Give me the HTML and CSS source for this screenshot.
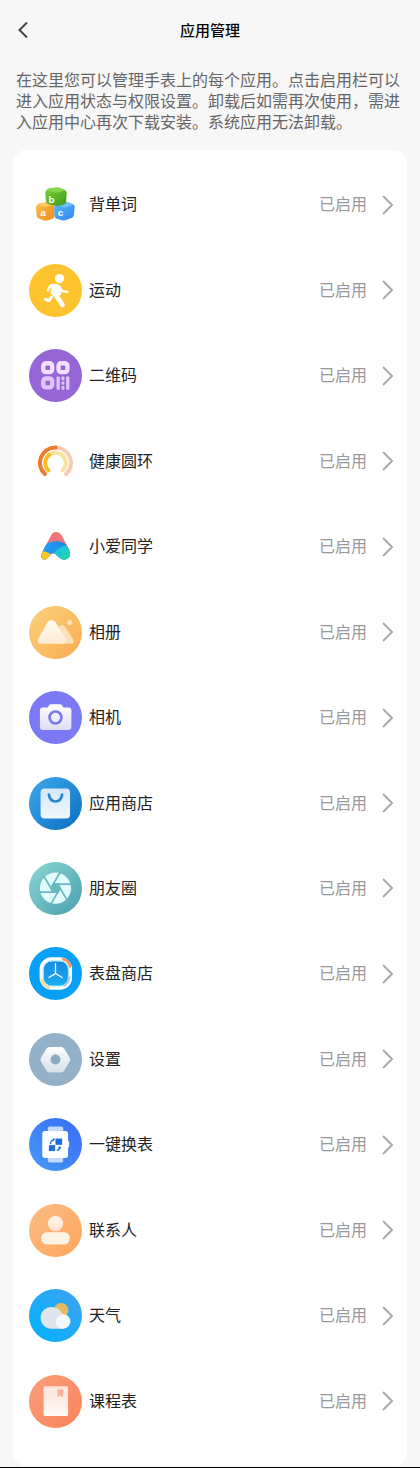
FILE: index.html
```html
<!DOCTYPE html>
<html lang="zh-CN">
<head>
<meta charset="UTF-8" />
<meta name="viewport" content="width=device-width, initial-scale=1" />
<title>应用管理</title>
<link rel="stylesheet" href="styles.css">
</head>
<body>
  <header class="topbar">
    <button class="back" type="button" aria-label="返回">
      <svg width="10" height="16" viewBox="0 0 10 16"><path d="M9 0.500 1.500 8 9 15.500" /></svg>
    </button>
    <h1>应用管理</h1>
  </header>

  <p class="intro">在这里您可以管理手表上的每个应用。点击启用栏可以进入应用状态与权限设置。卸载后如需再次使用，需进入应用中心再次下载安装。系统应用无法卸载。</p>

  <main class="card">
    <!-- 背单词 -->
    <a class="row" href="#">
      <svg class="icon" viewBox="0 0 160 160">
        <defs>
          <linearGradient id="cubeG" x2="1" y2="1"><stop stop-color="#7fd03a" /><stop offset="1" stop-color="#3a9a1c" /></linearGradient>
          <linearGradient id="cubeO" x2="1" y2="1"><stop stop-color="#ffc04a" /><stop offset="1" stop-color="#ec8a1c" /></linearGradient>
          <linearGradient id="cubeB" x2="1" y2="1"><stop stop-color="#5cb8f8" /><stop offset="1" stop-color="#2f86e6" /></linearGradient>
        </defs>
        <path fill="url(#cubeO)" d="M24 82q3-5 9-6l20-3q5 0 10 2l9 4q5 3 5 8v27q0 7-7 9l-14 5q-5 1-10 0l-16-6q-7-2-7-9l-2-22q0-5 3-9z" />
        <path fill="#ffc860" d="M24 82q3-5 9-6l20-3q5 0 10 2l11 6-20 5q-4 1-8 0z" />
        <path fill="url(#cubeB)" d="M80 80q3-4 9-5l20-3q6 0 11 2l13 5q5 3 5 9l-3 25q-1 6-7 8l-16 6q-5 2-10 1l-18-5q-7-2-7-9l-1-24q0-6 4-10z" />
        <path fill="#6cc2fb" d="M80 80q3-4 9-5l20-3q6 0 11 2l15 6-20 7q-5 2-10 1z" />
        <path fill="url(#cubeG)" d="M52 37q4-5 12-6l22-2q6 0 12 3l10 4q6 3 6 9l-2 27q-1 6-7 8l-14 4q-5 1-10 0l-22-5q-8-2-8-10l-2-22q0-6 3-10z" />
        <path fill="#86d648" d="M52 37q4-5 12-6l22-2q6 0 12 3l12 5-24 7q-4 1-8 0z" />
        <text class="cube-letter" x="68" y="74">b</text>
        <text class="cube-letter" x="42" y="116">a</text>
        <text class="cube-letter" x="95" y="116">c</text>
      </svg>
      <span class="name">背单词</span><span class="state">已启用</span>
      <svg class="arrow" viewBox="0 0 12 20"><path d="M1 1 10 10 1 19" /></svg>
    </a>

    <!-- 运动 -->
    <a class="row" href="#">
      <svg class="icon" viewBox="0 0 160 160">
        <circle cx="80" cy="80" r="80" fill="#fdc42f" />
        <circle cx="92" cy="44" r="14" fill="#fff" />
        <path fill="#fff" d="M63 62 84 60q6 0 8 5l6 14-1 12q-3 5-8 5l-14-8z" />
        <g fill="none" stroke="#fff" stroke-linecap="round" stroke-linejoin="round">
          <path stroke-width="7" d="M57 80 64 66 82 63M90 67l11 15 15 2" />
          <path stroke-width="14" d="M76 68 72 87M77 90l13 16 11 18" />
          <path stroke-width="9" d="M68 100 61 110 50 107" />
        </g>
      </svg>
      <span class="name">运动</span><span class="state">已启用</span>
      <svg class="arrow" viewBox="0 0 12 20"><path d="M1 1 10 10 1 19" /></svg>
    </a>

    <!-- 二维码 -->
    <a class="row" href="#">
      <svg class="icon" viewBox="0 0 160 160">
        <circle cx="80" cy="80" r="80" fill="#9665d6" />
        <g fill="none" stroke="#f1e0ff" stroke-width="13">
          <rect x="43" y="43" width="27" height="27" rx="8" />
          <rect x="89" y="43" width="27" height="27" rx="8" />
          <rect x="43" y="89" width="27" height="27" rx="8" stroke="#dfc6fa" />
        </g>
        <g fill="#dfc6fa">
          <rect x="83" y="83" width="10" height="40" rx="3" />
          <rect x="98" y="83" width="9" height="11" rx="3" />
          <rect x="98" y="98" width="9" height="10" rx="3" />
          <rect x="98" y="112" width="9" height="11" rx="3" />
          <rect x="112" y="83" width="10" height="40" rx="3" />
        </g>
      </svg>
      <span class="name">二维码</span><span class="state">已启用</span>
      <svg class="arrow" viewBox="0 0 12 20"><path d="M1 1 10 10 1 19" /></svg>
    </a>

    <!-- 健康圆环 -->
    <a class="row" href="#">
      <svg class="icon" viewBox="0 0 160 160">
        <g fill="none" stroke-width="12" stroke-linecap="round">
          <path stroke="#f8cdb0" d="M80 38A46 46 0 0 1 112 118" />
          <path stroke="#ee7b30" d="M48 118A46 46 0 0 1 80 38" />
          <path stroke="#fae3a0" d="M62 59A31 31 0 0 1 101 107" />
          <path stroke="#f9bd28" d="M59 107A31 31 0 0 1 62 59" />
        </g>
      </svg>
      <span class="name">健康圆环</span><span class="state">已启用</span>
      <svg class="arrow" viewBox="0 0 12 20"><path d="M1 1 10 10 1 19" /></svg>
    </a>

    <!-- 小爱同学 -->
    <a class="row" href="#">
      <svg class="icon" viewBox="0 0 160 160">
        <defs>
          <clipPath id="aiShape"><path d="M67 45Q72 36 82 36T98 45L121 88Q129 104 119 115 109 123 97 118 89 113 82 104 70 95 62 108 52 123 42 119 34 114 38 101Z" /></clipPath>
          <linearGradient id="aiTop" x2="0" y2="1"><stop stop-color="#f27a6c" /><stop offset="1" stop-color="#ee6aa8" /></linearGradient>
          <linearGradient id="aiMid" x2="1"><stop stop-color="#24a4f4" /><stop offset="1" stop-color="#1d7ee6" /></linearGradient>
          <linearGradient id="aiEnd" x2="1" y2="1"><stop stop-color="#19bde8" /><stop offset="1" stop-color="#26dc9c" /></linearGradient>
        </defs>
        <g clip-path="url(#aiShape)">
          <rect x="30" y="30" width="100" height="95" fill="url(#aiTop)" />
          <path fill="url(#aiMid)" d="M30 84Q80 50 112 74L130 125H30Z" />
          <path fill="url(#aiEnd)" d="M76 98Q96 74 116 78L135 100V125H90Z" />
          <path fill="#fbc61f" d="M30 94Q48 92 66 103L58 125H30Z" />
        </g>
      </svg>
      <span class="name">小爱同学</span><span class="state">已启用</span>
      <svg class="arrow" viewBox="0 0 12 20"><path d="M1 1 10 10 1 19" /></svg>
    </a>

    <!-- 相册 -->
    <a class="row" href="#">
      <svg class="icon" viewBox="0 0 160 160">
        <defs>
          <linearGradient id="album" x2="1" y2="1"><stop stop-color="#fad27c" /><stop offset="1" stop-color="#fbab50" /></linearGradient>
          <linearGradient id="hill" x2="0" y2="1"><stop stop-color="#fffaf2" /><stop offset="1" stop-color="#fdebd6" /></linearGradient>
        </defs>
        <circle cx="80" cy="80" r="80" fill="url(#album)" />
        <path fill="#fde0b8" d="M92 62q8-9 16 0l25 38q6 14-9 14H84z" />
        <path fill="url(#hill)" d="M56 49q12-14 24 0l30 48q6 17-10 17H38q-17 0-10-16z" />
        <circle cx="123" cy="50" r="8" fill="#fee3ba" />
      </svg>
      <span class="name">相册</span><span class="state">已启用</span>
      <svg class="arrow" viewBox="0 0 12 20"><path d="M1 1 10 10 1 19" /></svg>
    </a>

    <!-- 相机 -->
    <a class="row" href="#">
      <svg class="icon" viewBox="0 0 160 160">
        <defs><linearGradient id="cam" x2="0" y2="1"><stop stop-color="#fff" /><stop offset="1" stop-color="#deddfa" /></linearGradient></defs>
        <circle cx="80" cy="80" r="80" fill="#7c79f4" />
        <path fill="url(#cam)" d="M42 50h14l5-8q2-2 5-2h28q3 0 5 2l5 8h15q9 0 9 9v50q0 9-9 9H42q-9 0-9-9V59q0-9 9-9z" />
        <circle cx="80" cy="80" r="18" fill="none" stroke="#7b79e2" stroke-width="8" />
      </svg>
      <span class="name">相机</span><span class="state">已启用</span>
      <svg class="arrow" viewBox="0 0 12 20"><path d="M1 1 10 10 1 19" /></svg>
    </a>

    <!-- 应用商店 -->
    <a class="row" href="#">
      <svg class="icon" viewBox="0 0 160 160">
        <defs>
          <linearGradient id="shop" x2="1" y2="1"><stop stop-color="#3da8ee" /><stop offset="1" stop-color="#0b6fc0" /></linearGradient>
          <linearGradient id="bag" x2="0" y2="1"><stop stop-color="#d3e9fb" /><stop offset="1" stop-color="#f0f7fe" /></linearGradient>
        </defs>
        <circle cx="80" cy="80" r="80" fill="url(#shop)" />
        <rect x="35" y="35" width="89" height="90" rx="12" fill="url(#bag)" />
        <path fill="none" stroke="#2687cc" stroke-width="8" stroke-linecap="round" d="M60 53q3 21 20 21t20-21" />
      </svg>
      <span class="name">应用商店</span><span class="state">已启用</span>
      <svg class="arrow" viewBox="0 0 12 20"><path d="M1 1 10 10 1 19" /></svg>
    </a>

    <!-- 朋友圈 -->
    <a class="row" href="#">
      <svg class="icon" viewBox="0 0 160 160">
        <defs><linearGradient id="moments" x2="1" y2="1"><stop stop-color="#8ad6d2" /><stop offset="1" stop-color="#4a9fb0" /></linearGradient></defs>
        <circle cx="80" cy="80" r="80" fill="url(#moments)" />
        <circle cx="80" cy="79" r="47" fill="#e2fbfb" />
        <g fill="none" stroke="#68b9bf" stroke-width="5">
          <path fill="#68b9bf" d="M94 79 87 91H73L66 79 73 67H87Z" />
          <path d="M94 79 66 127M87 91H31M73 91 45 43M66 79 94 31M73 67h56M87 67l28 48" />
        </g>
      </svg>
      <span class="name">朋友圈</span><span class="state">已启用</span>
      <svg class="arrow" viewBox="0 0 12 20"><path d="M1 1 10 10 1 19" /></svg>
    </a>

    <!-- 表盘商店 -->
    <a class="row" href="#">
      <svg class="icon" viewBox="0 0 160 160">
        <defs>
          <linearGradient id="face" x2="0" y2="1"><stop stop-color="#1787dc" /><stop offset="1" stop-color="#1ab0f4" /></linearGradient>
        </defs>
        <circle cx="80" cy="80" r="80" fill="#08a0f6" />
        <rect x="38" y="37" width="86" height="86" rx="30" fill="url(#face)" stroke="#fff" stroke-width="12" />
        <g fill="none" stroke-linecap="round">
          <path stroke="#ff8f5c" stroke-width="8" d="M103 37q17 3 21 22" />
          <path stroke="#c7b2f4" stroke-width="6" d="M122 92q-2 18-16 25" />
          <path stroke="#ffd98a" stroke-width="8" d="M38 98q4 18 22 24" />
          <rect x="43" y="42" width="76" height="76" rx="26" stroke="#8ee6fa" stroke-width="3" />
          <path stroke="#fff" stroke-width="4" d="M80 50v30L60 92M80 80l20 12" />
        </g>
      </svg>
      <span class="name">表盘商店</span><span class="state">已启用</span>
      <svg class="arrow" viewBox="0 0 12 20"><path d="M1 1 10 10 1 19" /></svg>
    </a>

    <!-- 设置 -->
    <a class="row" href="#">
      <svg class="icon" viewBox="0 0 160 160">
        <defs><linearGradient id="nut" x2="0" y2="1"><stop stop-color="#fff" /><stop offset="1" stop-color="#d5e0ea" /></linearGradient></defs>
        <circle cx="80" cy="80" r="80" fill="#95b1c7" />
        <path fill="url(#nut)" d="M62 42h35q6 0 9 5l17 28q3 5 0 10l-17 29q-3 5-9 5H62q-6 0-9-5L36 85q-3-5 0-10l17-28q3-5 9-5z" />
        <circle cx="80" cy="80" r="15" fill="#8fabc3" />
      </svg>
      <span class="name">设置</span><span class="state">已启用</span>
      <svg class="arrow" viewBox="0 0 12 20"><path d="M1 1 10 10 1 19" /></svg>
    </a>

    <!-- 一键换表 -->
    <a class="row" href="#">
      <svg class="icon" viewBox="0 0 160 160">
        <defs><linearGradient id="swap" x1="0" y1="1" x2="1" y2="0"><stop stop-color="#459af8" /><stop offset="1" stop-color="#3a6bf5" /></linearGradient></defs>
        <circle cx="80" cy="80" r="80" fill="url(#swap)" />
        <rect x="57" y="26" width="46" height="108" rx="5" fill="#c3dafd" />
        <rect x="40" y="39" width="78" height="82" rx="9" fill="#fff" />
        <path fill="#f0f5fe" d="M117 70h4v18h-4z" />
        <rect x="80" y="62" width="20" height="19" fill="#1d6fd8" />
        <rect x="60" y="82" width="19" height="18" fill="#1d6fd8" />
        <path fill="none" stroke="#1d6fd8" stroke-width="4" d="M65 79q0-12 11-14M84 98q9-2 9-10" />
        <path fill="#1d6fd8" d="M73 60v10l6-6zM87 91l6-7 5 8z" />
      </svg>
      <span class="name">一键换表</span><span class="state">已启用</span>
      <svg class="arrow" viewBox="0 0 12 20"><path d="M1 1 10 10 1 19" /></svg>
    </a>

    <!-- 联系人 -->
    <a class="row" href="#">
      <svg class="icon" viewBox="0 0 160 160">
        <defs>
          <linearGradient id="contact" x2="1" y2="1"><stop stop-color="#fbbc84" /><stop offset="1" stop-color="#ffa65c" /></linearGradient>
          <linearGradient id="head" x2="0" y2="1"><stop stop-color="#fff6ee" /><stop offset="1" stop-color="#ffe4cc" /></linearGradient>
        </defs>
        <circle cx="80" cy="80" r="80" fill="url(#contact)" />
        <circle cx="80" cy="59" r="23" fill="url(#head)" />
        <rect x="37" y="85" width="86" height="37" rx="17" fill="#fff3e8" />
      </svg>
      <span class="name">联系人</span><span class="state">已启用</span>
      <svg class="arrow" viewBox="0 0 12 20"><path d="M1 1 10 10 1 19" /></svg>
    </a>

    <!-- 天气 -->
    <a class="row" href="#">
      <svg class="icon" viewBox="0 0 160 160">
        <defs><linearGradient id="sky" x1="1" y1="0" x2="0" y2="1"><stop stop-color="#3fa2f2" /><stop offset="1" stop-color="#00b2fe" /></linearGradient></defs>
        <circle cx="80" cy="80" r="80" fill="url(#sky)" />
        <circle cx="97" cy="64" r="22" fill="#e4b95c" />
        <path fill="#dfe6eb" d="M68 54a33 33 0 0 1 33 24l5 42H68a33 33 0 0 1 0-66z" />
        <path fill="#f4f8fb" d="M103 76a22 22 0 0 1 0 44q-14 0-20-12-4-12 2-21 7-11 18-11z" />
      </svg>
      <span class="name">天气</span><span class="state">已启用</span>
      <svg class="arrow" viewBox="0 0 12 20"><path d="M1 1 10 10 1 19" /></svg>
    </a>

    <!-- 课程表 -->
    <a class="row" href="#">
      <svg class="icon" viewBox="0 0 160 160">
        <defs>
          <linearGradient id="course" x2="1" y2="1"><stop stop-color="#f99f7c" /><stop offset="1" stop-color="#fb8258" /></linearGradient>
          <linearGradient id="book" x2="0" y2="1"><stop stop-color="#ffe3d6" /><stop offset="1" stop-color="#fffaf6" /></linearGradient>
        </defs>
        <circle cx="80" cy="80" r="80" fill="url(#course)" />
        <rect x="44" y="34" width="74" height="90" rx="4" fill="url(#book)" />
        <path fill="#fff4ee" d="M44 43h74v3H44zM44 109h74v2H44z" />
        <path fill="#f9b59b" d="M86 43h17v25l-8-6-9 6z" />
      </svg>
      <span class="name">课程表</span><span class="state">已启用</span>
      <svg class="arrow" viewBox="0 0 12 20"><path d="M1 1 10 10 1 19" /></svg>
    </a>
  </main>
</body>
</html>
```

FILE: styles.css
```css
* {
  box-sizing: border-box;
}

body {
  margin: 0;
  min-height: 100vh;
  display: flex;
  flex-direction: column;
  background-color: #f7f7f7;
  border-bottom: 1px solid #000;
  color: #222;
  font-family: "Noto Sans CJK SC", sans-serif;
  font-size: 16px;
}

/* 顶部标题栏 */
.topbar {
  display: grid;
  grid-template-columns: 48px 1fr 48px;
  align-items: center;
  height: 59px;
}
.topbar h1 {
  margin: 0;
  font-size: 15px;
  line-height: 22px;
  font-weight: 500;
  text-align: center;
  color: #000;
}
.back {
  display: flex;
  padding: 8px 18px;
  border: none;
  background: none;
  cursor: pointer;
}
.back svg {
  fill: none;
  stroke: #444;
  stroke-width: 2;
}

/* 说明文字 */
.intro {
  margin: 0;
  padding: 10px 16px 18px;
  line-height: 21px;
  color: #666;
}

/* 应用列表 */
.card {
  flex: 1;
  display: flex;
  flex-direction: column;
  margin: 0 13px 1px;
  padding: 12px 13px 22px 16px;
  border-radius: 14px;
  background-color: #fff;
}
.row {
  flex: 1;
  min-height: 80px;
  display: flex;
  align-items: center;
  color: inherit;
  text-decoration: none;
}
.icon {
  width: 53px;
  height: 53px;
  margin-right: 7px;
}
.name,
.state {
  padding-bottom: 3px;
}
.name {
  flex: 1;
}
.state {
  margin-right: 15px;
  color: #999;
}
.arrow {
  width: 12px;
  height: 20px;
  fill: none;
  stroke: #aaa;
  stroke-width: 2;
}
.cube-letter {
  font-family: "Liberation Sans", sans-serif;
  font-size: 30px;
  font-weight: 700;
  text-anchor: middle;
  fill: #fff;
}
```
